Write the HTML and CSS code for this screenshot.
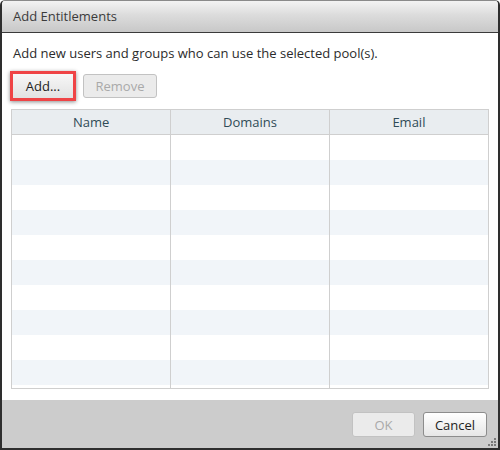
FILE: index.html
```html
<!DOCTYPE html>
<html>
<head>
<meta charset="utf-8">
<link rel="stylesheet" href="styles.css">
</head>
<body>
<div class="dialog">
  <div class="titlebar">Add Entitlements</div>
  <div class="content">
    <p class="desc">Add new users and groups who can use the selected pool(s).</p>
    <div class="toolbar">
      <div class="highlight"><button class="btn btn-add">Add...</button></div>
      <button class="btn btn-remove" disabled>Remove</button>
    </div>
    <div class="grid">
      <table>
        <thead>
          <tr><th>Name</th><th>Domains</th><th>Email</th></tr>
        </thead>
        <tbody>
          <tr><td></td><td></td><td></td></tr>
          <tr class="alt"><td></td><td></td><td></td></tr>
          <tr><td></td><td></td><td></td></tr>
          <tr class="alt"><td></td><td></td><td></td></tr>
          <tr><td></td><td></td><td></td></tr>
          <tr class="alt"><td></td><td></td><td></td></tr>
          <tr><td></td><td></td><td></td></tr>
          <tr class="alt"><td></td><td></td><td></td></tr>
          <tr><td></td><td></td><td></td></tr>
          <tr class="alt"><td></td><td></td><td></td></tr>
          <tr class="filler"><td></td><td></td><td></td></tr>
        </tbody>
      </table>
    </div>
  </div>
  <div class="footer">
    <button class="btn btn-ok" disabled>OK</button>
    <button class="btn btn-cancel">Cancel</button>
  </div>
  <svg class="grip" width="10" height="10" viewBox="0 0 10 10">
    <rect x="7" y="1" width="2" height="2" fill="#7a7a7a"/>
    <rect x="4" y="4" width="2" height="2" fill="#7a7a7a"/>
    <rect x="7" y="4" width="2" height="2" fill="#7a7a7a"/>
    <rect x="1" y="7" width="2" height="2" fill="#7a7a7a"/>
    <rect x="4" y="7" width="2" height="2" fill="#7a7a7a"/>
    <rect x="7" y="7" width="2" height="2" fill="#7a7a7a"/>
  </svg>
</div>
</body>
</html>
```
FILE: styles.css
```css
html, body {
  margin: 0;
  padding: 0;
  background: #ffffff;
}

body {
  font-family: "Open Sans", "Noto Sans", "Liberation Sans", sans-serif;
  font-size: 13px;
  color: #333333;
}

.dialog {
  position: relative;
  width: 500px;
  height: 450px;
  box-sizing: border-box;
  border: 2px solid #2e2e2e;
  border-top: 1px solid #8a8a8a;
  border-radius: 5px 5px 0 0;
  display: flex;
  flex-direction: column;
  overflow: hidden;
}

.titlebar {
  box-sizing: border-box;
  border-bottom: 1px solid #3a3a3a;
  flex: 0 0 32px;
  background: linear-gradient(#f3f3f3, #dcdcdc 45%, #c8c8c8);
  padding-left: 11px;
  font-size: 13px;
  line-height: 31px;
  color: #3b3b3b;
}

.content {
  flex: 1;
  background: #ffffff;
  padding: 12px 9px 11px 9px;
  display: flex;
  flex-direction: column;
}

.desc {
  margin: 0 0 10px 0;
  padding-left: 2px;
  line-height: 16px;
  font-size: 13px;
  color: #2b2b2b;
}

.toolbar {
  display: flex;
  align-items: center;
  gap: 7px;
  height: 30px;
  margin-left: -1px;
}

.highlight {
  border: 3px solid #ef4446;
  box-shadow: 0 1px 4px rgba(0, 0, 0, 0.45);
  display: flex;
}

.btn {
  font-family: "Open Sans", "Noto Sans", "Liberation Sans", sans-serif;
  font-size: 13px;
  height: 24px;
  box-sizing: border-box;
  border: 1px solid #8c8c8c;
  border-radius: 3px;
  background: linear-gradient(#ffffff, #e6e6e6);
  color: #222222;
  padding: 0;
  margin: 0;
}

.btn-add {
  width: 60px;
  border: none;
  border-radius: 0;
  background: linear-gradient(#f7f7f7, #e2e2e2);
}

.btn-remove {
  width: 74px;
}

.btn:disabled {
  border-color: #c2c2c2;
  background: #ebebeb;
  color: #a9a9a9;
}

.grid {
  margin-top: 8px;
  height: 280px;
  box-sizing: border-box;
  border: 1px solid #cfcfcf;
}

.grid table {
  width: 100%;
  border-collapse: collapse;
  table-layout: fixed;
}

.grid th {
  height: 24px;
  padding: 0;
  background: #e9edf0;
  border-bottom: 1px solid #cfcfcf;
  border-right: 1px solid #cfcfcf;
  font-weight: normal;
  font-size: 13px;
  color: #2f4b57;
  text-align: center;
}

.grid td {
  height: 25px;
  padding: 0;
  border-right: 1px solid #cfcfcf;
}

.grid th:last-child,
.grid td:last-child {
  border-right: none;
}

.grid tr.alt td {
  background: #f1f5f9;
}

.grid tr.filler td {
  height: 3px;
}

.footer {
  flex: 0 0 48px;
  background: #cccccc;
  display: flex;
  justify-content: flex-end;
  align-items: flex-start;
  gap: 8px;
  padding: 12px 11px 0 0;
  box-sizing: border-box;
}

.btn-ok {
  width: 63px;
  height: 25px;
}

.btn-cancel {
  width: 64px;
  height: 25px;
}

.grip {
  position: absolute;
  right: 1px;
  bottom: 1px;
}
```
